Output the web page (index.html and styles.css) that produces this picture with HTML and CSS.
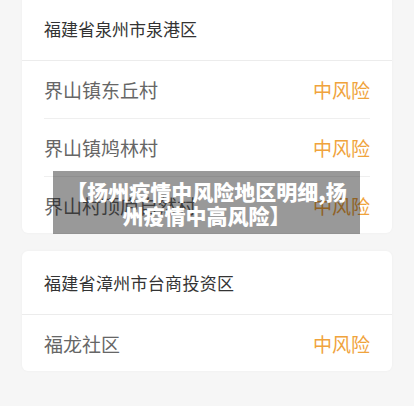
FILE: index.html
```html
<!DOCTYPE html>
<html lang="zh-CN">

<head>
   <meta charset="UTF-8">
   <meta name="viewport" content="width=device-width, initial-scale=1.0">
   <title>扬州疫情中风险地区明细</title>
   <link rel="stylesheet" href="styles.css">
</head>

<body>
   <div class="list">
      <div class="card card-first">
         <div class="card-head">福建省泉州市泉港区</div>
         <div class="row">
            <span class="name">界山镇东丘村</span>
            <span class="risk">中风险</span>
         </div>
         <div class="row">
            <span class="name">界山镇鸠林村</span>
            <span class="risk">中风险</span>
         </div>
         <div class="row">
            <span class="name">界山村顶庐自然村</span>
            <span class="risk">中风险</span>
         </div>
      </div>

      <div class="card">
         <div class="card-head wide">福建省漳州市台商投资区</div>
         <div class="row">
            <span class="name">福龙社区</span>
            <span class="risk">中风险</span>
         </div>
      </div>
   </div>

   <div class="caption">【扬州疫情中风险地区明细,扬州疫情中高风险】</div>
</body>

</html>
```

FILE: styles.css
```css
body {
   margin: 0;
   background-color: #f6f6f6;
   font-family: "Noto Sans CJK SC", "Noto Sans", sans-serif;
   height: 406px;
   overflow: hidden;
}

.list {
   display: flex;
   flex-direction: column;
   gap: 18px;
   padding: 0 22px;
}

.card {
   background-color: #fff;
   border-radius: 6px;
   box-shadow: 0 0 3px rgba(0, 0, 0, 0.04);
}

.card-first {
   margin-top: -3px;
   border-radius: 0 0 6px 6px;
}

.card-head {
   height: 63px;
   display: flex;
   align-items: center;
   padding: 0 22px;
   font-size: 17px;
   color: #333;
   border-bottom: 1px solid #ececec;
}

.card-head.wide {
   letter-spacing: 0.3px;
}

.row {
   height: 57px;
   margin: 0 22px;
   display: flex;
   align-items: center;
   justify-content: space-between;
   border-bottom: 1px solid #efefef;
   font-size: 19px;
}

.row:last-child {
   border-bottom: none;
   height: 56px;
}

.name {
   color: #666;
}

.risk {
   color: #f0a33c;
}

/* title strip laid over the list */
.caption {
   position: absolute;
   left: 53px;
   top: 171px;
   width: 307px;
   height: 63px;
   box-sizing: border-box;
   padding: 0 6px;
   display: flex;
   align-items: center;
   justify-content: center;
   text-align: center;
   background-color: rgba(0, 0, 0, 0.4);
   color: #fff;
   font-size: 21px;
   font-weight: 900;
   line-height: 24px;
}
```
